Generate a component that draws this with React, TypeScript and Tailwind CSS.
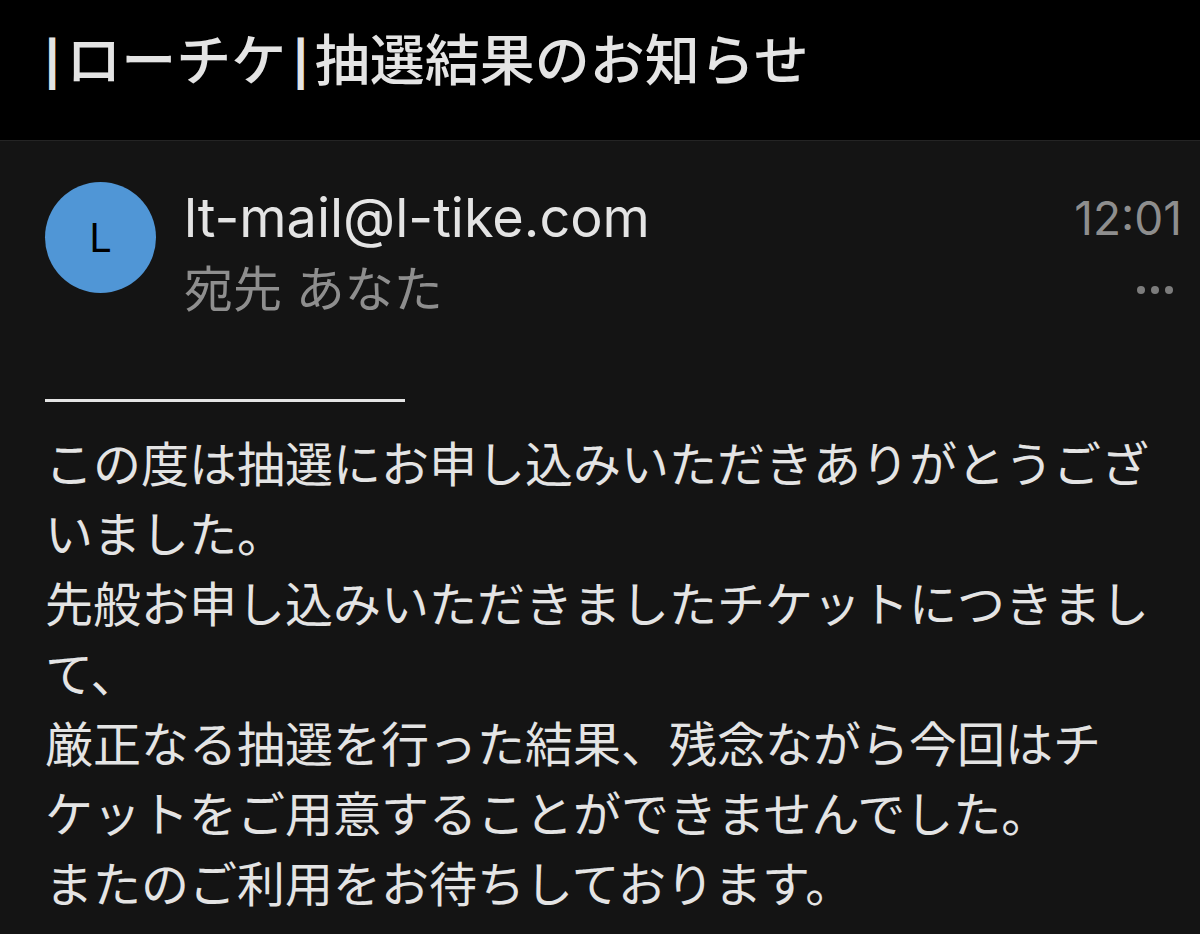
export default function App() {
  return (
    <div className="min-h-screen bg-[#141414] font-['Inter','Noto_Sans_CJK_JP',sans-serif] text-[#e4e4e4]">
      <header className="border-b border-[#242424] bg-black px-11 pt-6 pb-11">
        <h1 className="text-[55px] leading-[72px] font-medium">
          <span className="mr-1.5 text-[44px] leading-none font-bold">|</span>ローチケ<span className="mx-1.5 text-[44px] leading-none font-bold">|</span>抽選結果のお知らせ
        </h1>
      </header>
      <main>
        <section className="flex gap-7 pt-10 pr-[18px] pl-[45px]">
          <div className="mt-px flex size-[111px] shrink-0 items-center justify-center rounded-full bg-[#5096d6] text-[40px] text-black">L</div>
          <div className="min-w-0 flex-1 pt-px">
            <div className="flex items-center justify-between">
              <h2 className="text-[54px] leading-[72px]">lt-mail@l-tike.com</h2>
              <time className="text-[46px] leading-[72px] text-[#8e8e8e]">12:01</time>
            </div>
            <div className="flex items-center justify-between">
              <p className="text-[49px] leading-[72px] text-[#8e8e8e]">宛先 あなた</p>
              <button type="button" aria-label="その他" className="flex gap-1.5 px-[9px] py-4">
                <span className="size-2 rounded-full bg-[#7c7c7c]" />
                <span className="size-2 rounded-full bg-[#7c7c7c]" />
                <span className="size-2 rounded-full bg-[#7c7c7c]" />
              </button>
            </div>
          </div>
        </section>
        <article className="pt-[73px] pr-9 pl-[45px] font-['Noto_Sans_CJK_JP',sans-serif] text-[48px] leading-[70px] [line-break:strict]" lang="ja">
          <hr className="mb-6 w-[360px] border-t-[3px] border-[#e4e4e4]" />
          <p>この度は抽選にお申し込みいただきありがとうございました。</p>
          <p>先般お申し込みいただきましたチケットにつきまして、</p>
          <p>厳正なる抽選を行った結果、残念ながら今回はチケットをご用意することができませんでした。</p>
          <p>またのご利用をお待ちしております。</p>
        </article>
      </main>
    </div>
  );
}
